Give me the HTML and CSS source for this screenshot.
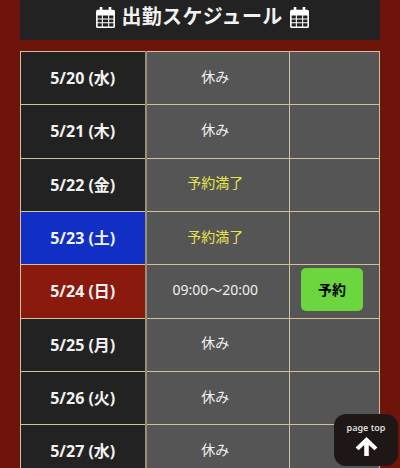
FILE: index.html
```html
<!DOCTYPE html>
<html lang="ja">
<head>
<meta charset="utf-8">
<title>出勤スケジュール</title>
<link rel="stylesheet" href="styles.css">
</head>
<body>
<svg class="defs" width="0" height="0" aria-hidden="true">
  <symbol id="cal" viewBox="0 0 18 20">
    <path fill="#fff" fill-rule="evenodd" d="M3.500 0h2.500v2.500h6V0h2.500v2.500h2A1.500 1.500 0 0 1 18 4v14.500a1.500 1.500 0 0 1-1.500 1.500h-15A1.500 1.500 0 0 1 0 18.500V4a1.500 1.500 0 0 1 1.500-1.500h2zM1.500 8v3h4V8zm5 0v3h5V8zm6 0v3h4V8zm-11 4v2.500h4V12zm5 0v2.500h5V12zm6 0v2.500h4V12zm-11 3.500v3h4v-3zm5 0v3h5v-3zm6 0v3h4v-3z"/>
  </symbol>
</svg>
<main class="page">
  <h2 class="title">
    <svg class="cal" aria-hidden="true"><use href="#cal"/></svg>
    <span>出勤スケジュール</span>
    <svg class="cal" aria-hidden="true"><use href="#cal"/></svg>
  </h2>
  <table class="schedule">
    <tbody>
      <tr><th>5/20 (水)</th><td class="status">休み</td><td></td></tr>
      <tr><th>5/21 (木)</th><td class="status">休み</td><td></td></tr>
      <tr><th>5/22 (金)</th><td class="status full">予約満了</td><td></td></tr>
      <tr><th class="sat">5/23 (土)</th><td class="status full">予約満了</td><td></td></tr>
      <tr><th class="sun">5/24 (日)</th><td class="status">09:00〜20:00</td><td class="action"><a class="reserve" href="#">予約</a></td></tr>
      <tr><th>5/25 (月)</th><td class="status">休み</td><td></td></tr>
      <tr><th>5/26 (火)</th><td class="status">休み</td><td></td></tr>
      <tr><th>5/27 (水)</th><td class="status">休み</td><td></td></tr>
    </tbody>
  </table>
</main>
<a class="pagetop" href="#">
  <span class="pagetop-label">page top</span>
  <svg class="pagetop-arrow" viewBox="0 0 24 20" aria-hidden="true"><path d="M12 0 23.500 11 20.300 14 14.400 8.400V20H9.600V8.400L3.700 14 0.500 11z" fill="#fff"/></svg>
</a>
</body>
</html>
```
FILE: styles.css
```css
html, body {
  margin: 0;
  height: 468px;
  overflow: hidden;
}
body {
  background: #6e140b;
  font-family: "Noto Sans", "Noto Sans CJK JP", sans-serif;
  color: #f2f2f2;
}
.defs { position: absolute; }
.page {
  padding: 0 20px;
}
.title {
  margin: 0;
  height: 40px;
  background: #222;
  display: flex;
  align-items: center;
  justify-content: center;
  gap: 7px;
  font-size: 20px;
  letter-spacing: 0.3px;
  font-weight: 700;
  line-height: 1;
  padding: 0 0 6px 4px;
  box-sizing: border-box;
}
.cal {
  width: 19px;
  height: 21px;
}
.schedule {
  margin-top: 11px;
  width: 360px;
  table-layout: fixed;
  border-collapse: collapse;
  background: #555;
}
.schedule th, .schedule td {
  border: 1px solid #d1c196;
  height: 53.330px;
  padding: 0;
  text-align: center;
  box-sizing: border-box;
  font-size: 14px;
}
.schedule th {
  width: 125px;
  background: #222;
  border-right: 2px solid #9a8f73;
  font-size: 16px;
  font-weight: 700;
  padding-bottom: 2px;
}
.schedule td:last-child { width: 90px; }
.schedule .status { padding: 0 5px 5px 0; }
.schedule th.sat { background: #112fc4; }
.schedule th.sun { background: #8a190e; }
.status { color: #f0f0f0; }
.full { color: #e6e64a; }
.schedule .action { padding: 0 5px 3px 0; }
.reserve {
  display: block;
  width: 62px;
  height: 43px;
  line-height: 43px;
  margin: 0 auto;
  background: #6cd63f;
  color: #000;
  border-radius: 5px;
  text-decoration: none;
  font-weight: 700;
  font-size: 14px;
}
.pagetop {
  position: fixed;
  left: 334px;
  top: 414px;
  width: 64px;
  height: 52px;
  box-sizing: border-box;
  background: #1f1716;
  border-radius: 12px;
  color: #ddd;
  text-decoration: none;
  display: flex;
  flex-direction: column;
  align-items: center;
  padding-top: 8px;
}
.pagetop-label {
  font-family: "Noto Sans", sans-serif;
  font-size: 9px;
  font-weight: 600;
  line-height: 12px;
}
.pagetop-arrow {
  width: 23px;
  height: 19px;
  margin-top: 3px;
}
```
